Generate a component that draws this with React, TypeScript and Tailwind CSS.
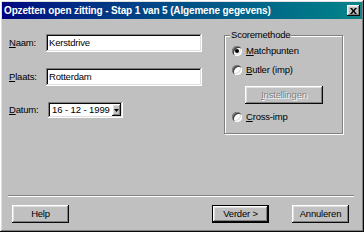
import React from "react";

const raised =
  "shadow-[inset_-1px_-1px_0_#0a0a0a,inset_1px_1px_0_#ffffff,inset_-2px_-2px_0_#808080,inset_2px_2px_0_#dfdfdf]";
const sunken =
  "shadow-[inset_-1px_-1px_0_#ffffff,inset_1px_1px_0_#808080,inset_-2px_-2px_0_#dfdfdf,inset_2px_2px_0_#0a0a0a]";

function Radio({ checked, label, u }: { checked?: boolean; label: string; u: string }) {
  return (
    <div className="flex items-center h-[12px] pl-[7px]">
      <div className="w-[10px] h-[10px] rounded-full bg-white flex items-center justify-center shadow-[inset_1px_1px_0_#808080,inset_2px_2px_0_#404040,inset_-1px_-1px_0_#ffffff,inset_-2px_-2px_0_#dfdfdf]">
        {checked && <div className="w-[4px] h-[4px] rounded-full bg-black" />}
      </div>
      <span className="ml-[4px] leading-[12px]">
        <span className="underline underline-offset-[1px]">{u}</span>
        {label}
      </span>
    </div>
  );
}

function Field({ label, u, value }: { label: string; u: string; value: string }) {
  return (
    <div className="flex items-center h-[18px]">
      <div className="w-[37px]">
        <span className="underline underline-offset-[1px]">{u}</span>
        {label}
      </div>
      <div className={`w-[156px] h-[18px] bg-white ${sunken} flex items-center pl-[3px]`}>{value}</div>
    </div>
  );
}

export default function App() {
  return (
    <div
      className={`w-[364px] h-[232px] bg-[#c0c0c0] p-[2px] flex flex-col font-['Liberation_Sans',Arial,sans-serif] text-[9.5px] text-black tracking-[-0.2px] ${raised}`}
    >
      {/* Title bar */}
      <div className="h-[17px] flex items-center pl-[2px] pr-[2px] bg-gradient-to-r from-[#000080] to-[#108488]">
        <span className="text-white font-bold text-[10px] tracking-[-0.15px]">
          Opzetten open zitting - Stap 1 van 5 (Algemene gegevens)
        </span>
        <div className={`ml-auto w-[13px] h-[11px] bg-[#c0c0c0] ${raised} flex items-center justify-center`}>
          <svg width="7" height="6" viewBox="0 0 7 6">
            <path d="M0 0h2l1.5 2L5 0h2L4.5 3 7 6H5L3.5 4 2 6H0l2.5-3z" fill="#000" />
          </svg>
        </div>
      </div>

      {/* Body */}
      <div className="flex pt-[15px] pl-[7px]">
        <div className="flex flex-col">
          <Field label="aam:" u="N" value="Kerstdrive" />
          <div className="mt-[16px]">
            <Field label="laats:" u="P" value="Rotterdam" />
          </div>
          <div className="mt-[16px] flex items-center h-[16px]">
            <div className="w-[39px]">
              <span className="underline underline-offset-[1px]">D</span>atum:
            </div>
            <div className={`w-[75px] h-[16px] bg-white ${sunken} flex items-center pl-[4px] pr-[2px]`}>
              <span className="tracking-[-0.1px]">16 - 12 - 1999</span>
              <div className={`ml-auto w-[9px] h-[12px] bg-[#c0c0c0] ${raised} flex items-center justify-center`}>
                <svg width="5" height="3" viewBox="0 0 5 3">
                  <path d="M0 0h5L2.5 3z" fill="#000" />
                </svg>
              </div>
            </div>
          </div>
        </div>

        {/* Group box */}
        <div className="ml-[22px] mt-[1px] w-[119px] h-[99px] border border-[#808080] shadow-[1px_1px_0_#ffffff,inset_1px_1px_0_#ffffff] flex flex-col">
          <div className="self-start ml-[5px] -mt-[7px] px-[1px] bg-[#c0c0c0] leading-[12px]">Scoremethode</div>
          <div className="mt-[4px]">
            <Radio checked u="M" label="atchpunten" />
          </div>
          <div className="mt-[7px]">
            <Radio u="B" label="utler (imp)" />
          </div>
          <div
            className={`mt-[10px] ml-[20px] w-[78px] h-[18px] ${raised} flex items-center justify-center text-[#808080] [text-shadow:1px_1px_0_#ffffff]`}
          >
            <span>
              <span className="underline underline-offset-[1px]">I</span>nstellingen
            </span>
          </div>
          <div className="mt-[7px]">
            <Radio u="C" label="ross-imp" />
          </div>
        </div>
      </div>

      {/* Bottom */}
      <div className="mt-auto flex flex-col pb-[7px]">
        <div className="ml-[6px] mr-[8px] h-[2px] border-t border-t-[#808080] border-b border-b-white" />
        <div className="mt-[8px] flex h-[18px] pl-[10px] pr-[13px]">
          <div className={`w-[57px] h-[18px] ${raised} flex items-center justify-center`}>Help</div>
          <div className="ml-auto w-[57px] h-[18px] border border-black flex">
            <div className={`flex-1 ${raised} flex items-center justify-center`}>Verder &gt;</div>
          </div>
          <div className={`ml-[23px] w-[57px] h-[18px] ${raised} flex items-center justify-center`}>Annuleren</div>
        </div>
      </div>
    </div>
  );
}
